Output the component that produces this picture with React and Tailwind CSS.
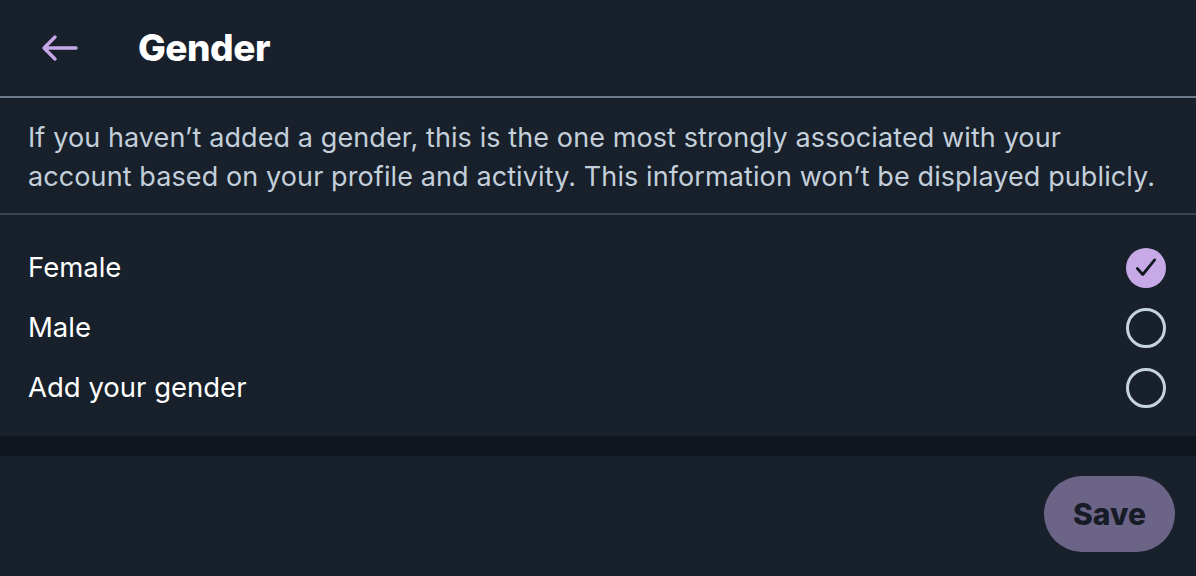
import { useState } from "react";

const options = ["Female", "Male", "Add your gender"];

function Radio({ checked }) {
  if (checked) {
    return (
      <span className="w-10 h-10 rounded-full bg-[#c8a9e8] flex items-center justify-center">
        <svg width="26" height="26" viewBox="0 0 24 24" fill="none">
          <path
            d="M4 12.5l5 5.5L20 4.5"
            stroke="#141a22"
            strokeWidth="2.6"
            strokeLinecap="round"
            strokeLinejoin="round"
          />
        </svg>
      </span>
    );
  }
  return (
    <span className="w-10 h-10 rounded-full border-[3px] border-[#c5d3dd]" />
  );
}

export default function App() {
  const [selected, setSelected] = useState("Female");

  return (
    <div className="w-[1196px] h-[576px] bg-[#17202b] font-['Inter',sans-serif] flex flex-col">
      <div className="h-[98px] shrink-0 flex items-center border-b-2 border-[#6b7988]">
        <button className="w-[40px] ml-[40px] flex items-center text-[#c5a6e6]">
          <svg width="40" height="32" viewBox="0 0 40 32" fill="none">
            <path
              d="M36 16H5M15 5L4 16l11 11"
              stroke="currentColor"
              strokeWidth="3.4"
              strokeLinecap="round"
              strokeLinejoin="round"
            />
          </svg>
        </button>
        <h1 className="ml-[58px] text-[37px] font-extrabold text-white tracking-[-0.5px]">
          Gender
        </h1>
      </div>

      <div className="px-[28px] pt-[20px] pb-[17px] border-b-2 border-[#39434e]">
        <p className="text-[27px] leading-[39px] text-[#c3cfda] tracking-[0.1px]">
          If you haven’t added a gender, this is the one most strongly associated with your
          <br />
          account based on your profile and activity. This information won’t be displayed publicly.
        </p>
      </div>

      <div className="pt-[23px] pb-[18px]">
        {options.map((opt) => (
          <div
            key={opt}
            onClick={() => setSelected(opt)}
            className="h-[60px] pl-[28px] pr-[30px] flex items-center justify-between cursor-pointer"
          >
            <span className="text-[27.5px] text-white">{opt}</span>
            <Radio checked={selected === opt} />
          </div>
        ))}
      </div>

      <div className="h-[20px] shrink-0 bg-[#0f161e]" />

      <div className="flex justify-end pt-[20px] pr-[21px]">
        <button className="w-[131px] h-[76px] rounded-full bg-[#6c6487] text-[#161b26] text-[30px] font-extrabold">
          Save
        </button>
      </div>
    </div>
  );
}
